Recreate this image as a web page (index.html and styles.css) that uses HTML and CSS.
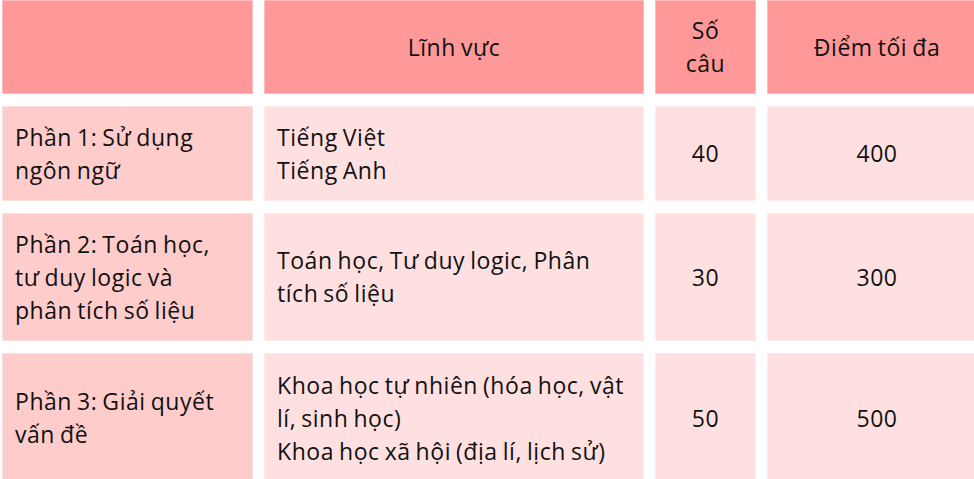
FILE: index.html
```html
<!DOCTYPE html>
<html lang="vi">
<head>
<meta charset="utf-8">
<link rel="stylesheet" href="styles.css">
</head>
<body>
<div class="table">
  <div class="cell head"></div>
  <div class="cell head center">Lĩnh vực</div>
  <div class="cell head center">Số<br>câu</div>
  <div class="cell head center">Điểm tối đa</div>

  <div class="cell part">Phần 1: Sử dụng ngôn ngữ</div>
  <div class="cell body">Tiếng Việt<br>Tiếng Anh</div>
  <div class="cell body center">40</div>
  <div class="cell body center">400</div>

  <div class="cell part">Phần 2: Toán học, tư duy logic và phân tích số liệu</div>
  <div class="cell body">Toán học, Tư duy logic, Phân tích số liệu</div>
  <div class="cell body center">30</div>
  <div class="cell body center">300</div>

  <div class="cell part">Phần 3: Giải quyết vấn đề</div>
  <div class="cell body">Khoa học tự nhiên (hóa học, vật lí, sinh học)<br>Khoa học xã hội (địa lí, lịch sử)</div>
  <div class="cell body center">50</div>
  <div class="cell body center">500</div>
</div>
</body>
</html>
```
FILE: styles.css
```css
html, body {
  margin: 0;
  padding: 0;
  background: #ffffff;
  overflow: hidden;
}
body {
  font-family: "Open Sans", "Noto Sans", sans-serif;
  font-size: 23px;
  line-height: 33px;
  letter-spacing: 0.55px;
  word-spacing: -1.5px;
  color: #111111;
}
.table {
  display: grid;
  grid-template-columns: 251px 380px 101px 220px;
  grid-template-rows: 94px 95px 128px 130px;
  column-gap: 11px;
  row-gap: 12px;
  margin-left: 2px;
}
.cell {
  box-sizing: border-box;
  border: 1px solid rgba(255, 255, 255, 0.35);
  padding: 0 12px;
  display: flex;
  flex-direction: column;
  justify-content: center;
}
.center {
  align-items: center;
  text-align: center;
}
.head {
  background: #ff9898;
}
.part {
  background: #ffcccc;
  padding-right: 22px;
}
.body {
  background: #ffe0e0;
}
```
